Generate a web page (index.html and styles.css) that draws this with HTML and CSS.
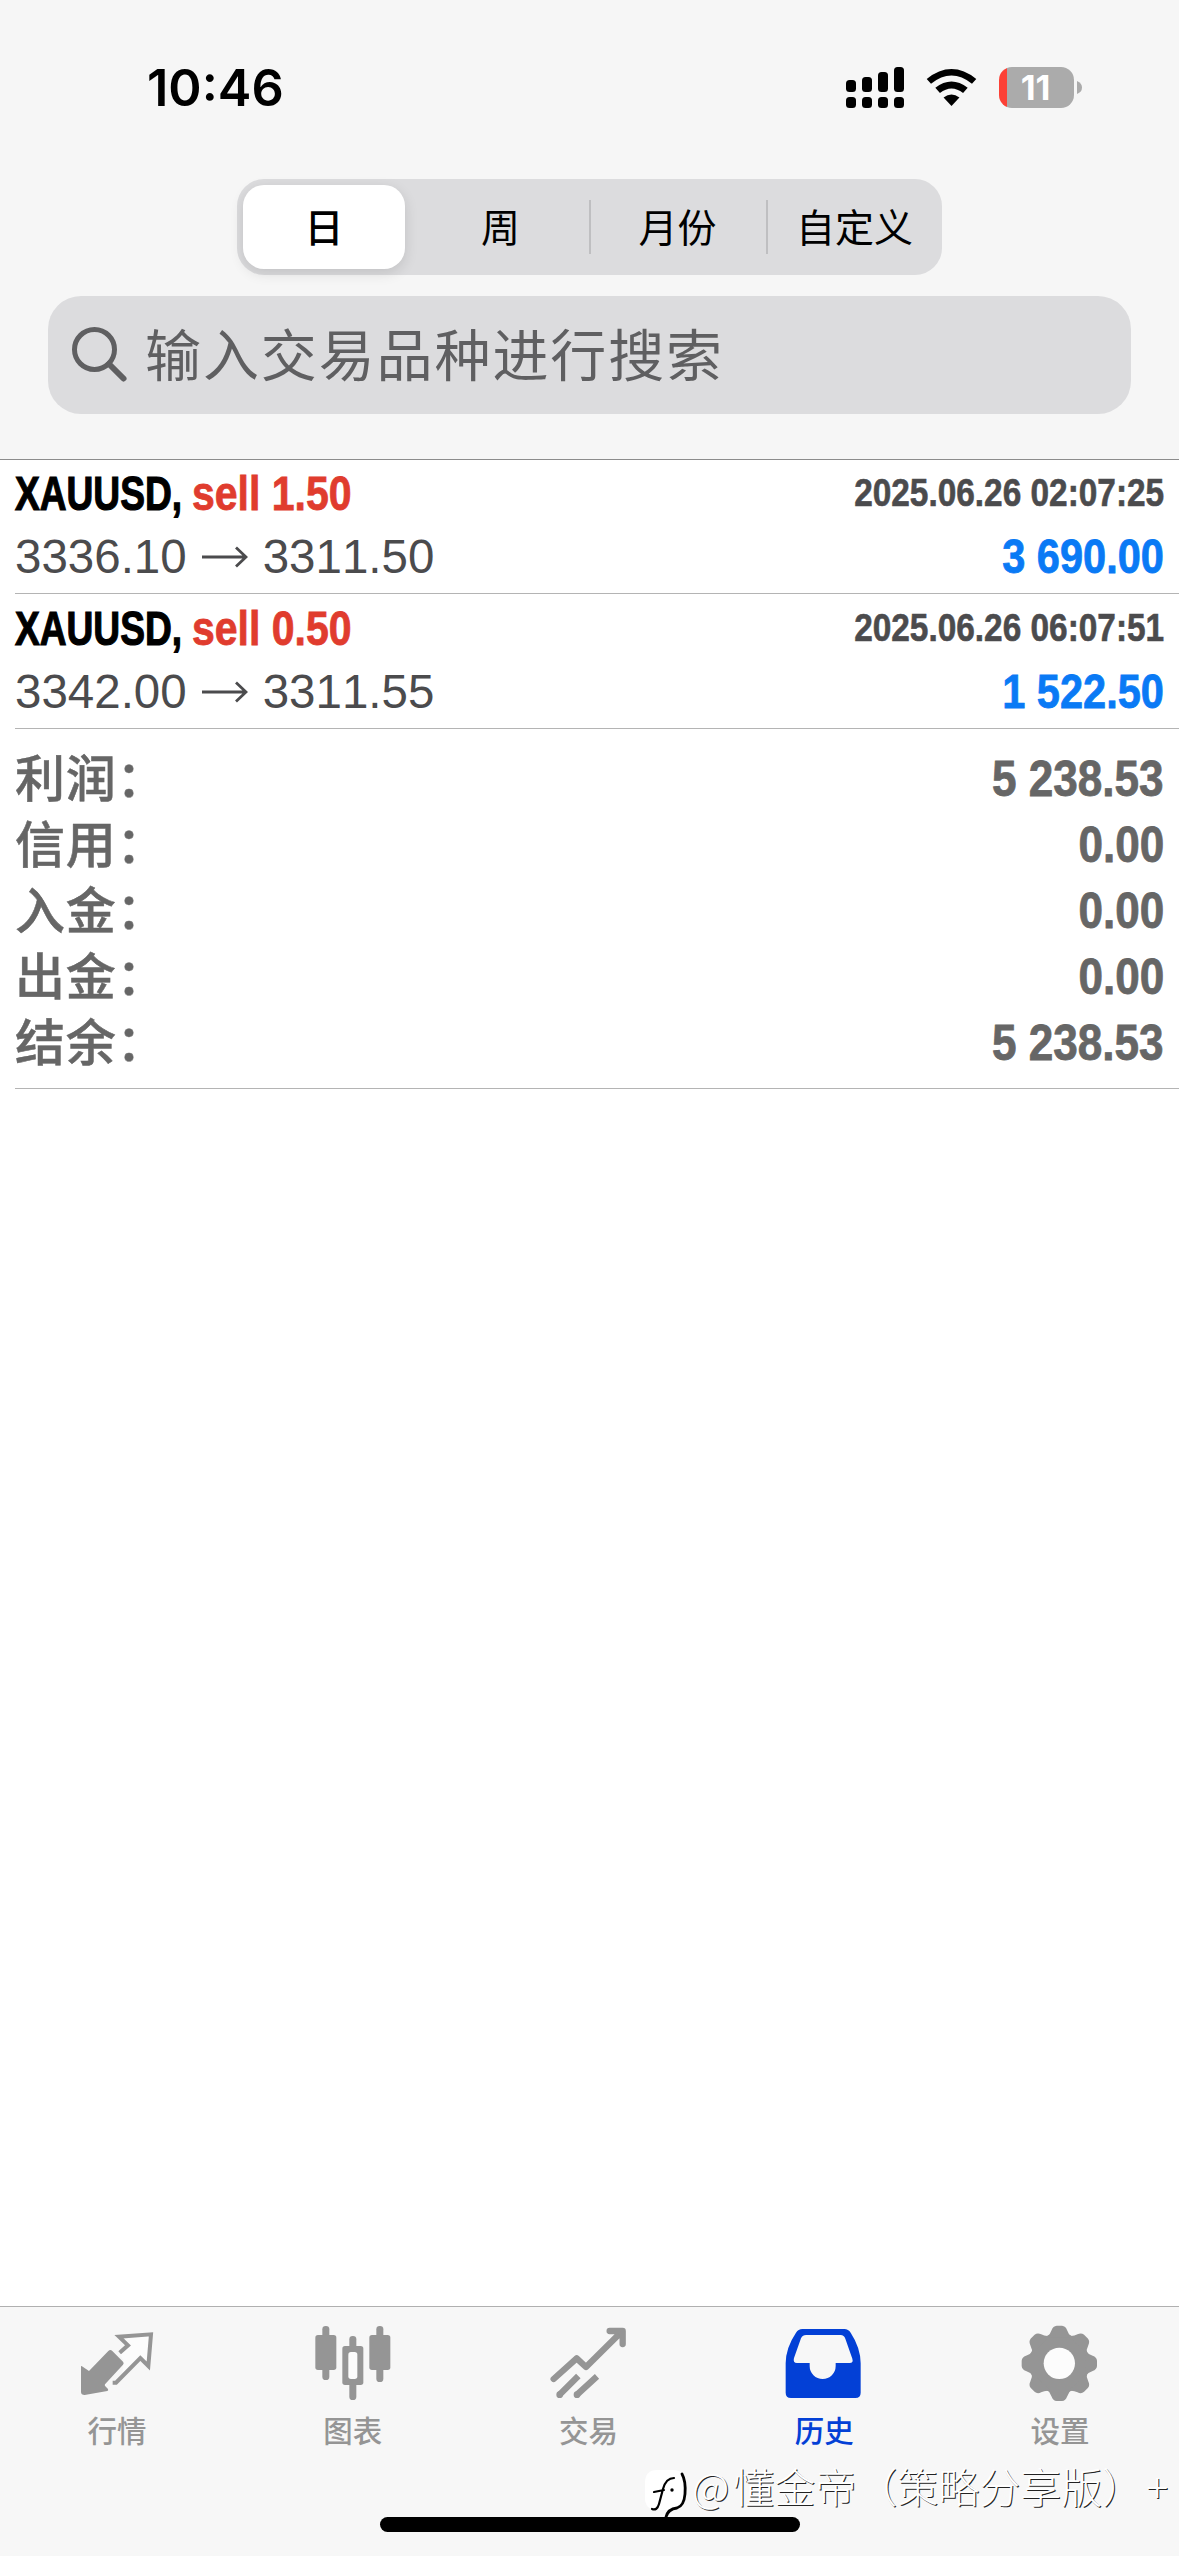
FILE: index.html
```html
<!DOCTYPE html>
<html lang="zh-CN">
<head>
<meta charset="utf-8">
<title>历史</title>
<link rel="stylesheet" href="styles.css">
</head>
<body>
<div class="app">
  <header class="header">
    <div class="status">
      <span class="clock">10:46</span>
      <div class="indicators">
        <svg class="signal" viewBox="0 0 58 41">
          <rect x="0" y="13" width="10" height="12" rx="3.5"/><rect x="16" y="10" width="10" height="15" rx="3.5"/><rect x="32" y="5" width="10" height="20" rx="3.5"/><rect x="48" y="0" width="10" height="25" rx="3.5"/>
          <rect x="0" y="30" width="10" height="11" rx="3.5"/><rect x="16" y="30" width="10" height="11" rx="3.5"/><rect x="32" y="30" width="10" height="11" rx="3.5"/><rect x="48" y="30" width="10" height="11" rx="3.5"/>
        </svg>
        <svg class="wifi" viewBox="320 87 150 112">
          <path d="M320 117Q395 57 470 117L457 132Q395 82 333 132Z"/>
          <path d="M346 144Q395 106 444 144L430 160Q395 132 360 160Z"/>
          <path d="M371 173Q395 155 419 173L395 199Z"/>
        </svg>
        <div class="battery"><span class="level">11</span></div>
        <svg class="nub" viewBox="0 0 5 13"><path d="M0 0Q5 2 5 6.500T0 13Z"/></svg>
      </div>
    </div>
    <nav class="segments">
      <span class="segment selected">日</span>
      <span class="segment">周</span>
      <span class="segment divided">月份</span>
      <span class="segment divided">自定义</span>
    </nav>
    <div class="search">
      <svg class="magnifier" viewBox="0 0 56 56"><circle cx="22.500" cy="22.500" r="20"/><path class="handle" d="M37 37L51.500 51.500"/></svg>
      <span class="placeholder">输入交易品种进行搜索</span>
    </div>
  </header>

  <main class="history">
    <section class="deal">
      <div class="line"><div class="title"><span class="symbol">XAUUSD,</span><span class="side">sell 1.50</span></div><span class="date">2025.06.26 02:07:25</span></div>
      <div class="line"><div class="prices"><span>3336.10</span><svg class="arrow" viewBox="0 0 46 22"><path d="M0 11H44M34 1.500L44 11L34 20.500"/></svg><span>3311.50</span></div><span class="profit">3 690.00</span></div>
    </section>
    <section class="deal">
      <div class="line"><div class="title"><span class="symbol">XAUUSD,</span><span class="side">sell 0.50</span></div><span class="date">2025.06.26 06:07:51</span></div>
      <div class="line"><div class="prices"><span>3342.00</span><svg class="arrow" viewBox="0 0 46 22"><path d="M0 11H44M34 1.500L44 11L34 20.500"/></svg><span>3311.55</span></div><span class="profit">1 522.50</span></div>
    </section>
    <section class="summary">
      <div class="total"><span class="label">利润：</span><span class="amount">5 238.53</span></div>
      <div class="total"><span class="label">信用：</span><span class="amount">0.00</span></div>
      <div class="total"><span class="label">入金：</span><span class="amount">0.00</span></div>
      <div class="total"><span class="label">出金：</span><span class="amount">0.00</span></div>
      <div class="total"><span class="label">结余：</span><span class="amount">5 238.53</span></div>
    </section>
  </main>

  <footer class="footer">
    <nav class="tabs">
      <div class="tab">
        <svg class="icon" viewBox="114 96 240 240">
          <path class="inside" d="M268 166L248 141L333 133L325 226L301 204L245 262L252 215L240 192Z"/>
          <path d="M123 229Q124 226 128 230L147 243L205 183Q211 177 217 183L249 215Q253 220 249 224L195 283Q193 286 196 289L204 297Q206 301 202 303L134 315Q123 315 123 306Z"/>
          <path class="outline" d="M239 188L264 166L237 140L333 133L325 228L301 204L228 278L218 278"/>
        </svg>
        <span class="name">行情</span>
      </div>
      <div class="tab">
        <svg class="icon" viewBox="821 96 240 240">
          <rect x="846" y="108" width="21" height="162" rx="10"/><rect x="825" y="135" width="63" height="105" rx="8"/>
          <rect x="1008" y="108" width="21" height="168" rx="10"/><rect x="987" y="135" width="63" height="105" rx="8"/>
          <rect x="927" y="138" width="21" height="192" rx="10"/><rect x="906" y="168" width="63" height="117" rx="8"/><rect class="inside" x="924" y="186" width="27" height="81" rx="8"/>
        </svg>
        <span class="name">图表</span>
      </div>
      <div class="tab">
        <svg class="icon" viewBox="148 96 240 240">
          <path class="trend" d="M162 267L231 205L259 231L365 126M330 123H369V162"/>
          <path d="M345 120H371V147Z"/>
          <path class="trend butt" d="M181 313L236 258M233 313L292 259"/><circle cx="180" cy="314" r="10"/><circle cx="232" cy="314" r="10"/>
        </svg>
        <span class="name">交易</span>
      </div>
      <div class="tab active">
        <svg class="icon" viewBox="856 96 240 240">
          <path fill-rule="evenodd" d="M908 117H1034Q1046 117 1053 128Q1083 174 1083 220V308Q1083 324 1067 324H874Q858 324 858 308V220Q858 174 889 128Q896 117 908 117ZM919 135Q909 135 904 145L883 204Q879 219 892 219H930V228A39 39 0 0 0 1008 228V219H1050Q1062 219 1058 206L1037 146Q1033 135 1023 135Z"/>
        </svg>
        <span class="name">历史</span>
      </div>
      <div class="tab">
        <svg class="icon" viewBox="364 96 240 240">
          <defs><path id="tooth" d="M440 142Q452 134 456 120Q460 108 471 107H487Q498 108 502 120Q506 134 518 142Z"/></defs>
          <circle cx="479" cy="220" r="90"/>
          <use href="#tooth"/><use href="#tooth" transform="rotate(45 479 220)"/><use href="#tooth" transform="rotate(90 479 220)"/><use href="#tooth" transform="rotate(135 479 220)"/><use href="#tooth" transform="rotate(180 479 220)"/><use href="#tooth" transform="rotate(225 479 220)"/><use href="#tooth" transform="rotate(270 479 220)"/><use href="#tooth" transform="rotate(315 479 220)"/>
          <circle class="inside" cx="479" cy="220" r="47"/>
        </svg>
        <span class="name">设置</span>
      </div>
    </nav>
    <div class="home-bar"></div>
    <div class="watermark">
      <svg class="logo" viewBox="0 0 44 50">
        <path fill="#fff" d="M12 0H28Q40 0 40 13V28Q40 40 28 40H12Q0 40 0 28V13Q0 0 12 0Z"/>
        <path class="ink edge" d="M37 4Q41 11 40 24Q39 36 32 38Q23 39 21 47"/>
        <path class="ink" d="M29 8Q21 8 18 19L14 34Q12 41 7 39M9 22L19 20"/>
        <circle cx="27" cy="20" r="1.700"/>
      </svg>
      <span class="author"><span class="at">@</span>懂金帝（策略分享版）</span><span class="plus">+</span>
    </div>
  </footer>
</div>
</body>
</html>
```
FILE: styles.css
```css
* { box-sizing: border-box; }
body { margin: 0; background: #fff; font-family: "Liberation Sans", "Noto Sans CJK SC", sans-serif; }
svg { display: block; flex: none; }
.app { width: 1179px; height: 2556px; display: flex; flex-direction: column; overflow: hidden; }

.header { height: 460px; background: #f6f6f6; border-bottom: 1px solid #8c8c8c; display: flex; flex-direction: column; align-items: center; flex: none; }
.status { width: 100%; height: 179px; padding: 58px 97px 0 147px; display: flex; justify-content: space-between; flex: none; }
.clock { font: 600 50.5px/60px Inter, sans-serif; }
.indicators { display: flex; align-items: flex-start; padding-top: 9px; }
.signal { width: 58px; height: 41px; }
.wifi { width: 51px; height: 37px; margin: 2px 22px 0 22px; }
.battery { width: 75px; height: 41px; border-radius: 13px; background: linear-gradient(to right, #fc4136 8px, #ababab 8px); text-align: center; padding-right: 2px; }
.level { font: 700 34.5px/41px Inter, sans-serif; color: #fff; }
.nub { width: 5px; height: 13px; margin: 14px 0 0 3px; fill: #ababab; }

.segments { width: 705px; height: 96px; border-radius: 27px; background: #dcdcde; padding: 6px; display: flex; align-items: center; font: 400 39px/84px "Noto Sans CJK SC", sans-serif; flex: none; }
.segment { flex: none; width: 177px; height: 84px; padding-bottom: 3px; line-height: 81px; text-align: center; position: relative; }
.segment.selected { width: 162px; margin-right: 7px; border-radius: 21px; background: #fff; box-shadow: 0 4px 14px rgba(0,0,0,.12); font-weight: 500; }
.segment.divided::before { content: ""; position: absolute; left: 0; top: 15px; width: 2px; height: 54px; background: #bfbfc1; }

.search { width: 1083px; height: 118px; margin-top: 21px; border-radius: 33px; background: #dcdcde; display: flex; align-items: center; padding-left: 24px; gap: 17px; color: #5f5f61; flex: none; }
.magnifier { width: 56px; height: 56px; fill: none; stroke: #5f5f61; stroke-width: 5; }
.handle { stroke-width: 6; stroke-linecap: round; }
.placeholder { font: 400 56px/80px "Noto Sans CJK SC", sans-serif; letter-spacing: 1.9px; padding-bottom: 7px; }

.history { flex: 1; padding-left: 15px; }
.deal { height: 134px; padding: 4px 15px 0 0; border-bottom: 1px solid #b4b4b4; }
.deal + .deal { height: 135px; padding-top: 5px; }
.line { height: 63px; display: flex; justify-content: space-between; font-size: 48px; line-height: 60px; white-space: nowrap; }
.title { display: flex; font-weight: 700; }
.symbol { width: 177px; transform: scaleX(.773); transform-origin: left; -webkit-text-stroke: 1.2px; }
.side { color: #e03c2e; transform: scaleX(.854); transform-origin: left; -webkit-text-stroke: .8px; }
.date { font-weight: 700; font-size: 39px; line-height: 57px; height: 57px; color: #4b4b4d; transform: scaleX(.856); transform-origin: right; -webkit-text-stroke: .6px; }
.prices { display: flex; font-size: 47.5px; color: #4b4b4d; font-kerning: none; }
.arrow { width: 46px; height: 22px; margin: 19px 15px 0 15px; fill: none; stroke: #4b4b4d; stroke-width: 2.8; }
.profit { font-weight: 700; color: #0a7af5; transform: scaleX(.865); transform-origin: right; -webkit-text-stroke: .8px; }

.summary { height: 360px; padding: 17px 15px 0 0; border-bottom: 1px solid #b4b4b4; color: #666; }
.total { height: 66px; display: flex; justify-content: space-between; align-items: flex-start; }
.label { font: 500 50px/58px "Noto Sans CJK SC", sans-serif; letter-spacing: .8px; -webkit-text-stroke: .5px; }
.amount { font-weight: 700; font-size: 50px; line-height: 66px; transform: scaleX(.882); transform-origin: right; -webkit-text-stroke: .8px; }

.footer { height: 250px; background: #f7f7f7; border-top: 1px solid #b0b0b0; position: relative; flex: none; }
.tabs { display: flex; padding-top: 15px; }
.tab { flex: 1; display: flex; flex-direction: column; align-items: center; color: #959595; }
.tab.active { color: #0340d6; }
.icon { width: 80px; height: 80px; fill: currentColor; }
.inside { fill: #fcfcfc; }
.outline { fill: none; stroke: currentColor; stroke-width: 12; }
.trend { fill: none; stroke: currentColor; stroke-width: 19; stroke-linecap: round; stroke-linejoin: round; }
.trend.butt { stroke-linecap: butt; }
.name { font: 500 29.5px/44px "Noto Sans CJK SC", sans-serif; margin: 5px 2px 0 0; }
.home-bar { width: 420px; height: 15px; border-radius: 8px; background: #000; position: absolute; left: 380px; top: 210px; }
.watermark { position: absolute; left: 645px; top: 156px; height: 50px; display: flex; align-items: flex-start; color: #fff; white-space: nowrap; }
.logo { width: 44px; height: 50px; margin-top: 7px; }
.ink { fill: none; stroke: #000; stroke-width: 2.2; stroke-linecap: round; }
.ink.edge { stroke-width: 2.8; }
.author, .plus { font: 300 41px/44px "Noto Sans CJK SC", sans-serif; text-shadow: 1px 1px 0 #222; }
.author { margin-left: 3px; }
.at { margin-right: 4px; }
.plus { margin-left: 3px; }
```
